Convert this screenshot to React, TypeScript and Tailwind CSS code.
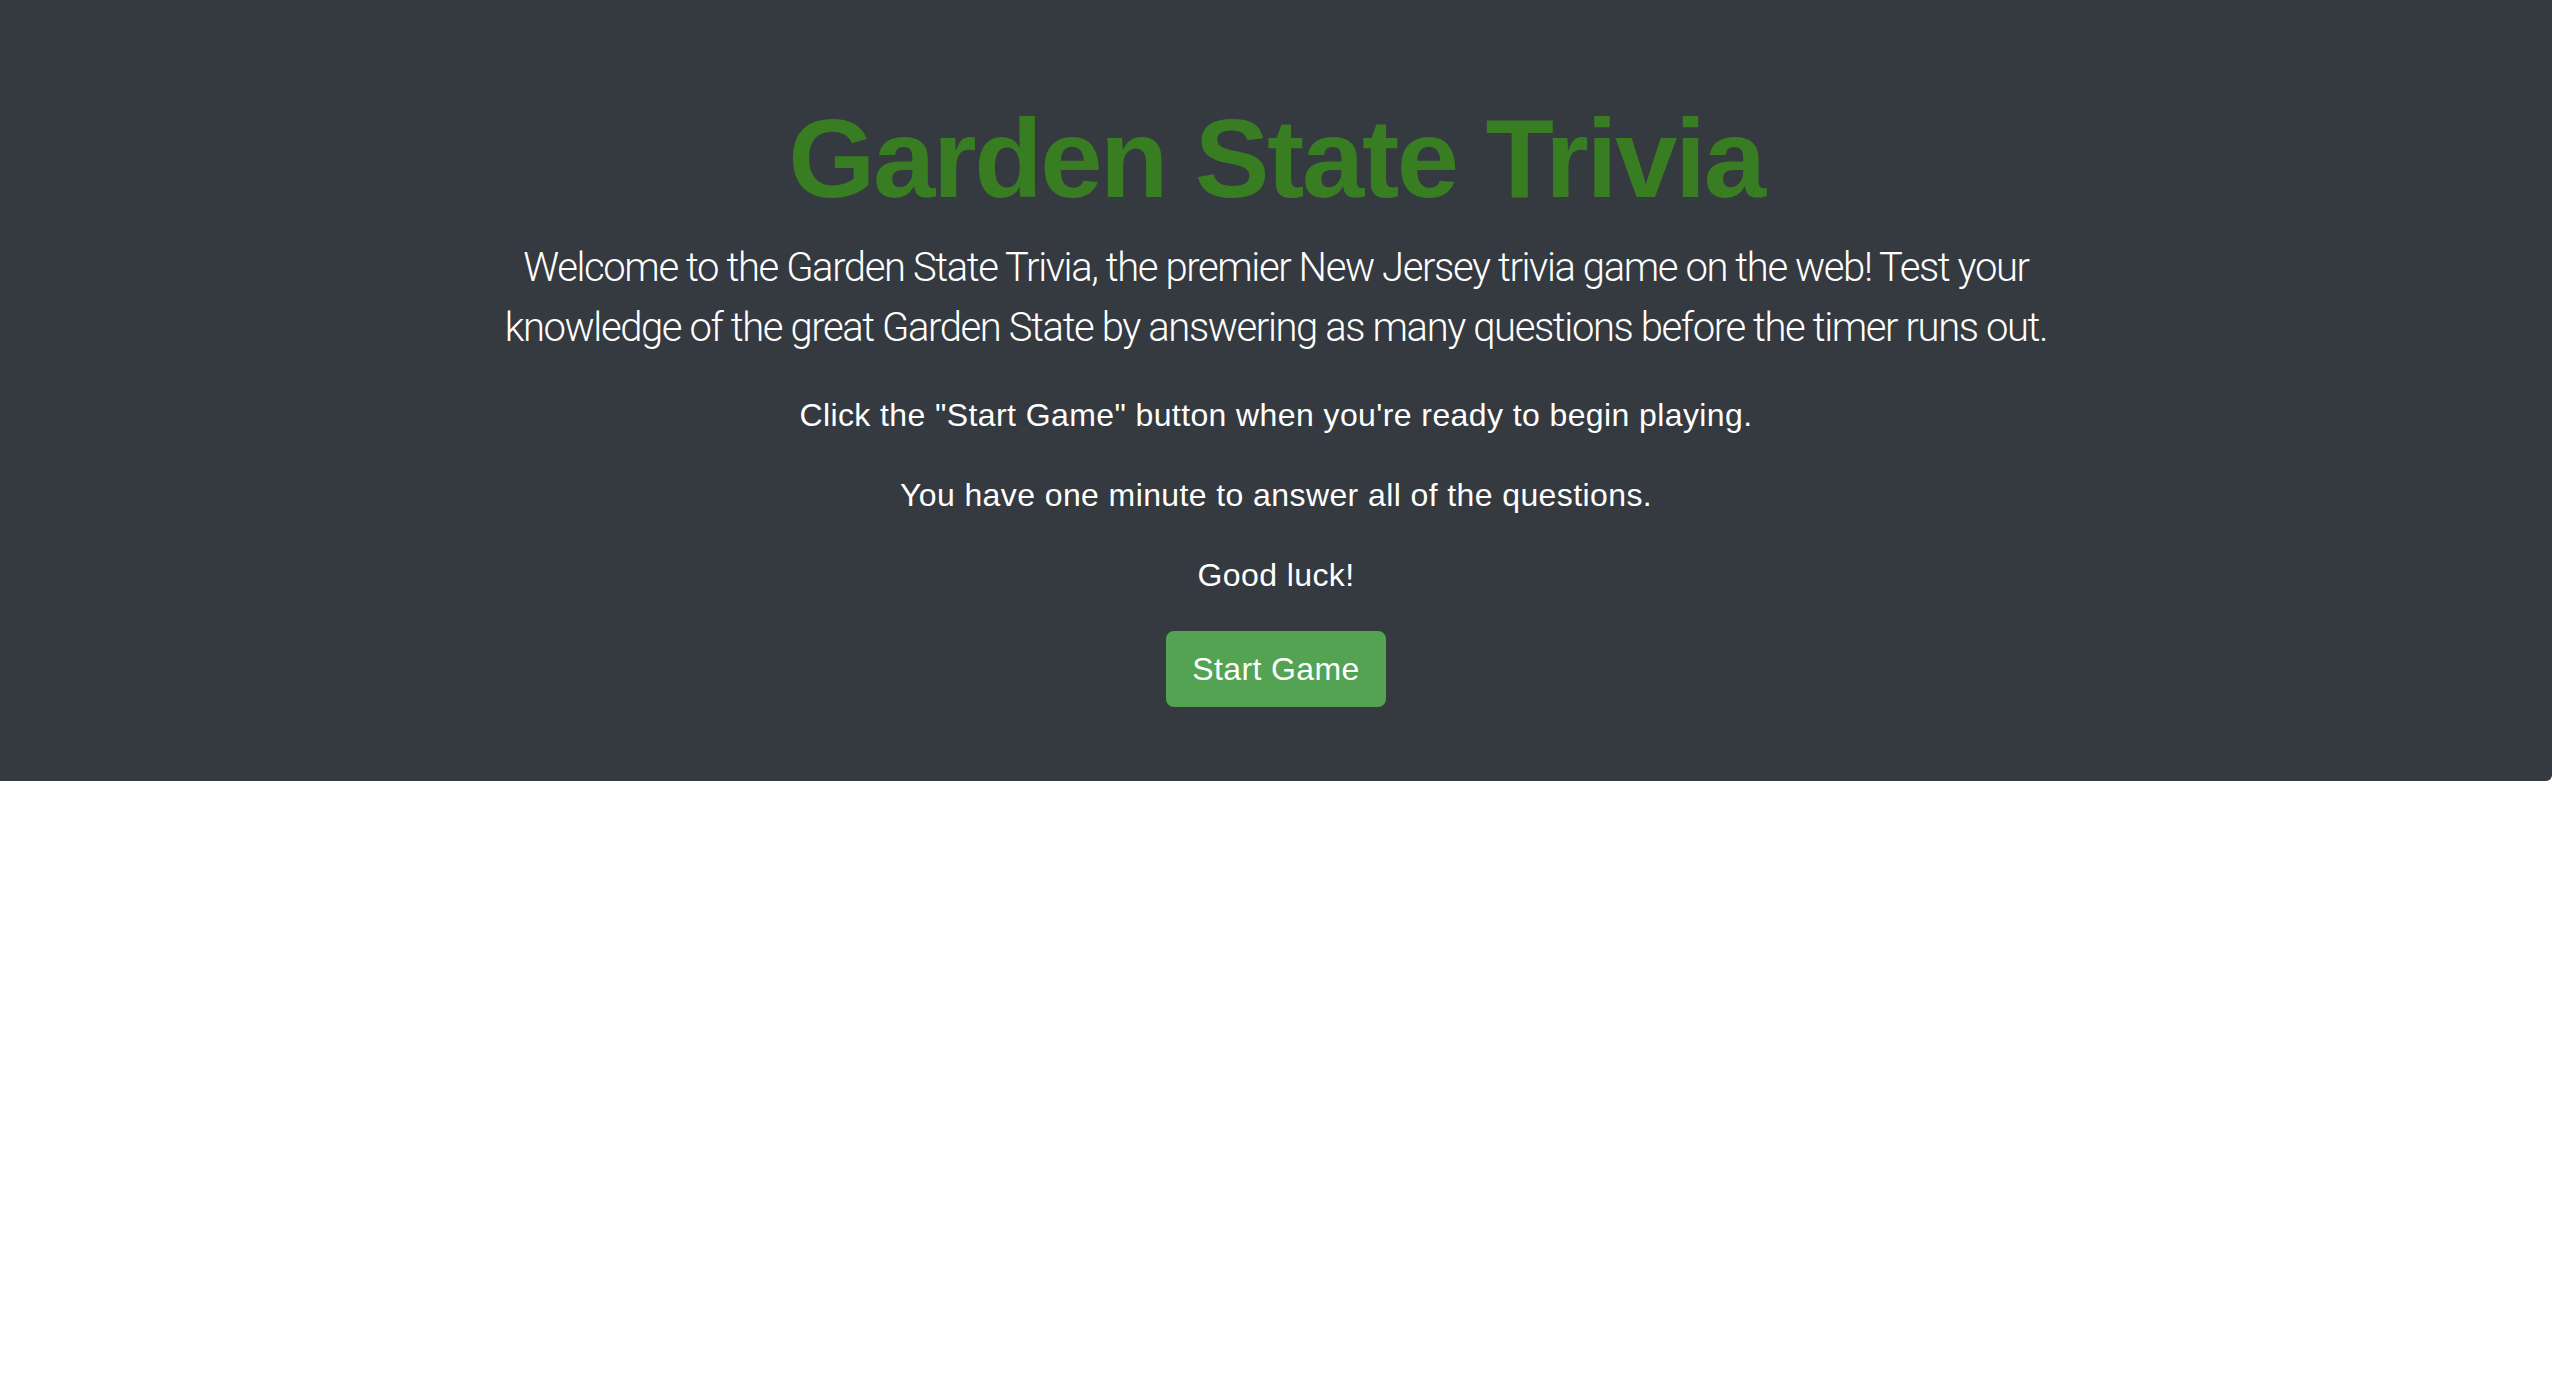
import React from 'react';

function App() {
  return (
    <div className="min-h-screen bg-white font-['Liberation_Sans',Arial,sans-serif]">
      <div className="bg-[#343a40] rounded-br-[6px] pt-[92px] pb-[74px] text-center text-white">
        <div className="max-w-[1600px] mx-auto">
          <h1 className="text-[112px] leading-[1.2] font-bold tracking-[-2.4px] text-[#387d22] mb-[12px]">Garden State Trivia</h1>
          <p className="font-['Roboto',sans-serif] text-[40px] leading-[1.5] font-light tracking-[-1.4px] mb-[33px]">
            Welcome to the Garden State Trivia, the premier New Jersey trivia game on the web! Test your knowledge of the great Garden State by answering as many questions before the timer runs out.
          </p>
          <p className="text-[32px] leading-[1.5] tracking-[0.4px] mb-[32px]">Click the "Start Game" button when you're ready to begin playing.</p>
          <p className="text-[32px] leading-[1.5] tracking-[0.4px] mb-[32px]">You have one minute to answer all of the questions.</p>
          <p className="text-[32px] leading-[1.5] tracking-[0.4px] mb-[32px]">Good luck!</p>
          <button className="bg-[#53a353] border-2 border-[#53a353] rounded-[8px] px-[24px] py-[12px] text-[32px] leading-[1.5] tracking-[0.4px] text-white">
            Start Game
          </button>
        </div>
      </div>
    </div>
  );
}

export default App;
